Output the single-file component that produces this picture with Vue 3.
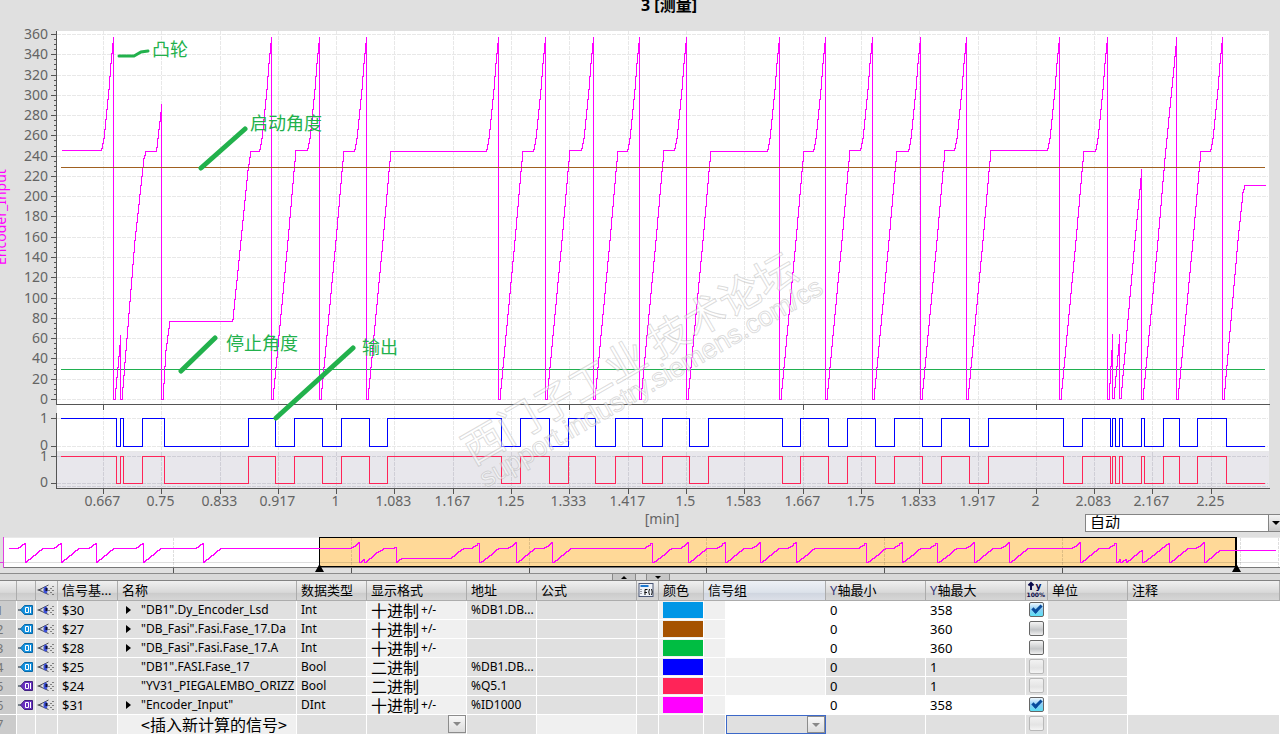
<script setup>
import { ref } from 'vue'

const bottom = 399
const yOf = (v) => Math.round(bottom - v * 1.0139) + 0.5

const yTicks = Array.from({ length: 19 }, (_, i) => ({ value: i * 20, y: yOf(i * 20) }))
const yMinor = Array.from({ length: 73 }, (_, i) => i * 5).filter((v) => v % 20).map(yOf)

const xPositions = [103, 161, 220, 278, 336, 394, 453, 511, 569, 628, 686, 744, 803, 861, 919, 978, 1036, 1094, 1152, 1211]
const xLabels = ['0.667', '0.75', '0.833', '0.917', '1', '1.083', '1.167', '1.25', '1.333', '1.417', '1.5', '1.583', '1.667', '1.75', '1.833', '1.917', '2', '2.083', '2.167', '2.25']
const xTicks = xPositions.map((x, i) => ({ x: x + 0.5, label: xLabels[i], major: i % 4 === 0 }))

// Encoder curve: climb to the dwell angle, wait, then finish the turn and wrap to zero.
const finish = (x, dwell) => [
  [x - 13, dwell], [x - 12, dwell - 2], [x - 10, 138], [x - 8, 119], [x - 5, 89],
  [x - 3, 63], [x - 1, 43], [x, 36], [x, bottom], [x + 1, bottom],
]
const climb = (x, dwell) => [[x + 16, 240], [x + 22, 171], [x + 24, dwell]]

const turns = [[271, 150], [319, 151], [366, 151], [498, 151], [545, 150], [593, 151], [639, 150], [686, 151], [779, 151], [825, 150], [872, 151], [920, 150], [966, 150], [1059, 151]]
const resets = [319, 366, 498, 545, 593, 639, 686, 779, 825, 872, 920, 966, 1059, 1107]

const encoder = [
  [61, 150], ...finish(113, 150),
  [120, 334], [120, bottom], [121, bottom],
  [134, 240], [143, 158], [145, 151], [155, 151], [156, 147], [161, 103], [161, bottom], [162, bottom],
  [165, 350], [168, 328], [169, 321], [231, 321], [232, 319], [240, 240], [247, 170], [250, 151],
  ...finish(271, 151),
  ...turns.flatMap(([x, dwell], i) => [...climb(x, dwell), ...finish(resets[i], dwell)]),
  [1112, 333], [1112, 398], [1113, 398], [1119, 333], [1119, 398], [1120, 398],
  [1134, 240], [1141, 168], [1141, bottom], [1142, bottom],
  [1157, 240], [1164, 158], [1176, 36], [1176, bottom], [1177, bottom],
  ...climb(1176, 151), ...finish(1222, 151),
  [1237, 240], [1242, 192], [1244, 185], [1265, 185],
]

function stepPath(points) {
  let d = `M${points[0][0] + 0.5} ${points[0][1] + 0.5}`
  for (let i = 1; i < points.length; i++) {
    const [x0, y0] = points[i - 1]
    const [x1, y1] = points[i]
    if (x0 === x1 || y0 === y1) {
      d += `L${x1 + 0.5} ${y1 + 0.5}`
      continue
    }
    for (let x = x0 + 1; x <= x1; x++) {
      const y = Math.round(y0 + ((y1 - y0) * (x - x0)) / (x1 - x0))
      d += `H${x + 0.5}V${y + 0.5}`
    }
  }
  return d
}
const encoderPath = stepPath(encoder)

// The overview strip shows the whole recording at a smaller scale.
const miniX = (x) => Math.round(359 + (x - 113) * 0.762)
const miniY = (y) => Math.round(562 - (bottom - y) * 0.0556)
const earlier = [25, 61, 96, 143, 203].flatMap((x) => [
  [x - 8, 548], [x, 542], [x, 562], [x + 1, 561], [x + 17, 548],
])
const overviewPath = stepPath([
  [8, 548], ...earlier,
  ...encoder.map(([x, y]) => [miniX(x), miniY(y)]),
  [1275, 550],
])
const overviewTicks = [173, 351, 529, 706, 884, 1062]

const edges = [116, 120, 123, 142, 164, 248, 275, 294, 322, 341, 369, 387, 501, 520, 549, 568, 595, 615, 642, 662, 689, 708, 782, 800, 828, 847, 875, 894, 922, 941, 969, 988, 1063, 1082, 1110, 1112, 1115, 1119, 1122, 1141, 1144, 1163, 1179, 1197, 1226]
function digitalPath(high, low) {
  let d = `M61 ${high}`
  edges.forEach((x, i) => { d += `H${x + 0.5}V${i % 2 ? high : low}` })
  return d + 'H1265'
}
const bluePath = digitalPath(418.5, 446.5)
const redPath = digitalPath(456.5, 483.5)

const columns = [17, 19, 22, 60, 179, 70, 100, 70, 100, 22, 45, 22, 100, 100, 100, 22, 80]

const rows = ref([
  { n: 1, id: '$30', tag: 'blue', name: '"DB1".Dy_Encoder_Lsd', open: true, type: 'Int', fmt: '十进制', sign: '+/-', addr: '%DB1.DB...', color: '#0096e6', max: '358', on: true, analog: true },
  { n: 2, id: '$27', tag: 'blue', name: '"DB_Fasi".Fasi.Fase_17.Da', open: true, type: 'Int', fmt: '十进制', sign: '+/-', addr: '', color: '#a55200', max: '360', on: false, analog: true },
  { n: 3, id: '$28', tag: 'blue', name: '"DB_Fasi".Fasi.Fase_17.A', open: true, type: 'Int', fmt: '十进制', sign: '+/-', addr: '', color: '#00bd42', max: '360', on: false, analog: true },
  { n: 4, id: '$25', tag: 'blue', name: '"DB1".FASI.Fase_17', open: false, type: 'Bool', fmt: '二进制', sign: '', addr: '%DB1.DB...', color: '#0000ff', max: '1', on: false, analog: false },
  { n: 5, id: '$24', tag: 'purple', name: '"YV31_PIEGALEMBO_ORIZZ', open: false, type: 'Bool', fmt: '二进制', sign: '', addr: '%Q5.1', color: '#ff2458', max: '1', on: false, analog: false },
  { n: 6, id: '$31', tag: 'purple', name: '"Encoder_Input"', open: true, type: 'DInt', fmt: '十进制', sign: '+/-', addr: '%ID1000', color: '#ff00ff', max: '358', on: true, analog: true },
])
</script>

<template>
  <main class="trace">
    <header class="title"><h1>3 [测量]</h1></header>

    <svg class="chart" viewBox="0 31 1280 482" role="img" aria-label="Encoder_Input">
      <g shape-rendering="crispEdges">
        <rect x="57" y="31" width="1212" height="373" fill="#fff" />
        <rect x="57" y="405" width="1212" height="46" fill="#fff" />
        <rect x="57" y="451" width="1212" height="37" fill="#e8e7ec" />

        <g class="grid">
          <line v-for="t in yTicks" :key="t.value" x1="57" x2="1268" :y1="t.y" :y2="t.y" />
          <line v-for="t in xTicks" :key="t.x" y1="31" y2="451" :x1="t.x" :x2="t.x" />
          <path d="M57 418.5H1268M57 446.5H1268M57 451.5H1268" />
        </g>
        <g class="grid lower">
          <line v-for="t in xTicks" :key="t.x" y1="452" y2="488" :x1="t.x" :x2="t.x" />
          <path d="M57 456.5H1268M57 483.5H1268M57 486.5H1268" />
        </g>

        <g class="axis">
          <path d="M56.5 31V404.5H1270M56.5 413V488.5H1270M51 418.5H56M51 446.5H56M51 456.5H56M51 483.5H56" />
          <line v-for="t in yTicks" :key="t.value" x1="51" x2="56" :y1="t.y" :y2="t.y" />
          <line v-for="y in yMinor" :key="y" x1="54" x2="56" :y1="y" :y2="y" />
          <line v-for="t in xTicks" :key="t.x" y1="489" y2="494" :x1="t.x" :x2="t.x" />
          <template v-for="t in xTicks" :key="t.x">
            <line v-if="t.major" y1="405" y2="410" :x1="t.x" :x2="t.x" />
          </template>
        </g>

        <g fill="none">
          <path d="M61 369.5H1265" stroke="#20b050" />
          <path :d="encoderPath" stroke="#f0f" />
          <path d="M61 167.5H1265" stroke="#a06020" />
          <path :d="bluePath" stroke="#00f" />
          <path :d="redPath" stroke="#ff2458" />
        </g>
      </g>

      <g class="labels" text-anchor="end">
        <text v-for="t in yTicks" :key="t.value" x="48" :y="t.y + 4">{{ t.value }}</text>
        <text x="48" y="423">1</text>
        <text x="48" y="450">0</text>
        <text x="48" y="461">1</text>
        <text x="48" y="487">0</text>
      </g>
      <g class="labels" text-anchor="middle">
        <text v-for="t in xTicks" :key="t.x" :x="t.x - 1" y="506">{{ t.label }}</text>
      </g>
      <text class="series" transform="translate(6 265) rotate(-90)">Encoder_Input</text>

      <g class="watermark">
        <text class="wm-name" transform="translate(473 466) rotate(-30)">西门子工业 技术论坛</text>
        <text class="wm-url" transform="translate(486 488) rotate(-30)">support.industry.siemens.com/cs</text>
      </g>

      <g class="pen">
        <path d="M119 56H134L141 52L148 51" stroke-width="3" />
        <path d="M201 168L245 129M181 371L215 338M276 418L353 348" stroke-width="5" />
      </g>
      <g class="notes">
        <text x="152" y="56">凸轮</text>
        <text x="250" y="130">启动角度</text>
        <text x="226" y="350">停止角度</text>
        <text x="362" y="354">输出</text>
      </g>
    </svg>

    <div class="unit-row">
      <span class="unit">[min]</span>
      <label class="combo">
        <select aria-label="自动"><option>自动</option></select>
        <span class="combo-arrow"><i></i></span>
      </label>
    </div>

    <svg class="overview" viewBox="0 537 1280 37" role="img" aria-label="Overview">
      <g shape-rendering="crispEdges" fill="none">
        <rect x="4" y="538" width="1276" height="29" fill="#fff" />
        <path d="M3 537.5H1280" stroke="#e9e9e9" />
        <rect x="320" y="538" width="916" height="29" fill="#ffd998" />
        <path d="M3 567.5H1280" stroke="#777" />
        <g stroke="#000" stroke-opacity="0.13">
          <path d="M4 562.5H1278" />
          <path v-for="x in overviewTicks" :key="x" :d="`M${x + 0.5} 538V567`" stroke-dasharray="3 1" />
          <path d="M1240.5 538V567M1278.5 538V567" stroke-dasharray="3 1" />
        </g>
        <path d="M319.5 567V537.5H1236M319.5 566.5H1236" stroke="#000" />
        <path d="M1236 537V567" stroke="#000" stroke-width="2" />
        <path d="M3.5 537V568M0 562.5H3" stroke="#e040e0" />
        <path :d="overviewPath" stroke="#f0f" />
        <path v-for="x in overviewTicks" :key="x" :d="`M${x + 0.5} 568V573`" stroke="#555" />
        <path d="M0 573.5H1280" stroke="#8c8c8c" />
      </g>
      <path d="M319.5 564L324 572H315ZM1236.500 564L1241 572H1232Z" fill="#000" />
    </svg>

    <div class="splitter">
      <button type="button" aria-label="Collapse up"><i class="up"></i></button>
      <button type="button" aria-label="Collapse down"><i class="down"></i></button>
    </div>

    <table class="signals">
      <colgroup>
        <col v-for="(w, i) in columns" :key="i" :style="{ width: w + 'px' }" />
        <col />
      </colgroup>
      <thead>
        <tr>
          <th></th>
          <th></th>
          <th>
            <svg class="icon" viewBox="0 0 20 18"><use href="#eye" /></svg>
          </th>
          <th><div>信号基...</div></th>
          <th><div>名称</div></th>
          <th><div>数据类型</div></th>
          <th><div>显示格式</div></th>
          <th><div>地址</div></th>
          <th><div>公式</div></th>
          <th>
            <svg class="icon" viewBox="0 0 20 18">
              <rect x="1.500" y="2.500" width="14" height="13" fill="#eef2f8" stroke="#4c5878" />
              <path d="M3 5H11" stroke="#1c78d0" stroke-width="2" />
              <path d="M3.500 8V14" stroke="#445" stroke-dasharray="1 1" />
              <path d="M7.500 14V8.500H10M7 11.500H9.500M12 8Q10.500 11 12 14M14 8Q15.500 11 14 14" fill="none" stroke="#111" />
            </svg>
          </th>
          <th><div>颜色</div></th>
          <th colspan="2" class="picked"><div>信号组</div></th>
          <th><div><span class="y">Y</span>轴最小</div></th>
          <th><div><span class="y">Y</span>轴最大</div></th>
          <th>
            <svg class="icon" viewBox="0 0 20 18">
              <path d="M4.500 9V3M2 4.500L4.500 2L7 4.500" fill="none" stroke="#0a0a4a" stroke-width="2" />
              <text x="9" y="8" class="scale-y">y</text>
              <text x="0" y="16" class="scale-p">100%</text>
            </svg>
          </th>
          <th><div>单位</div></th>
          <th><div>注释</div></th>
        </tr>
      </thead>
      <tbody>
        <tr v-for="r in rows" :key="r.n">
          <td class="num"><div>{{ r.n }}</div></td>
          <td>
            <svg class="icon" viewBox="0 0 18 18">
              <path d="M1 9H4" stroke="#123" />
              <path d="M3.500 9L7.500 4.500H15.500V13.500H7.500Z" :fill="r.tag === 'blue' ? '#1492e0' : '#6a30c0'" :stroke="r.tag === 'blue' ? '#0868a8' : '#402080'" />
              <path d="M8.500 6.500H11.500V11.500H8.500ZM13.500 6V12" fill="none" stroke="#fff" />
            </svg>
          </td>
          <td><svg class="icon" viewBox="0 0 20 18"><use href="#eye" /></svg></td>
          <td><div>{{ r.id }}</div></td>
          <td class="small">
            <div>
              <button v-if="r.open" type="button" class="expander" :aria-label="'Expand ' + r.id"><i></i></button>
              <span v-else class="expander"></span>{{ r.name }}
            </div>
          </td>
          <td class="small"><div>{{ r.type }}</div></td>
          <td class="edit"><div class="mixed"><span class="cjk">{{ r.fmt }}</span><span v-if="r.sign" class="sign">{{ r.sign }}</span></div></td>
          <td class="small"><div>{{ r.addr }}</div></td>
          <td></td>
          <td></td>
          <td class="edit"><div><span class="swatch" :style="{ background: r.color }"></span></div></td>
          <td class="edit"></td>
          <td :class="r.analog ? 'open' : 'edit'"></td>
          <td :class="{ open: r.analog }"><div>0</div></td>
          <td :class="{ open: r.analog }"><div>{{ r.max }}</div></td>
          <td :class="{ open: r.analog }" class="check">
            <input v-model="r.on" type="checkbox" :disabled="!r.analog" :aria-label="'Auto scale ' + r.id" />
          </td>
          <td></td>
          <td class="open"></td>
        </tr>
        <tr>
          <td class="num"><div>7</div></td>
          <td></td>
          <td></td>
          <td></td>
          <td class="edit"><div class="mixed"><span class="expander"></span><span class="cjk">&lt;插入新计算的信号&gt;</span></div></td>
          <td></td>
          <td>
            <button type="button" class="drop" aria-label="显示格式"><i></i></button>
          </td>
          <td></td>
          <td class="edit"></td>
          <td></td>
          <td></td>
          <td></td>
          <td class="focused">
            <label class="group">
              <select aria-label="信号组"><option></option></select>
              <span class="drop"><i></i></span>
            </label>
          </td>
          <td></td>
          <td></td>
          <td class="check"><input type="checkbox" disabled aria-label="Auto scale" /></td>
          <td></td>
          <td></td>
        </tr>
      </tbody>
    </table>

    <svg class="defs" aria-hidden="true">
      <symbol id="eye" viewBox="0 0 20 18">
        <path d="M12 4L2 9L12 13.500M1 9H5" fill="none" stroke="#505058" />
        <ellipse cx="9" cy="9" rx="2" ry="3.500" fill="#3c50d8" />
        <rect x="9" y="7" width="2" height="3" fill="#101030" />
        <path d="M12 9.500H13M14 7.500H15M14 11.500H15M16 5.500H17M16 9.500H17M16 13.500H17" stroke="#222" />
      </symbol>
    </svg>
  </main>
</template>

<style>
body {
  margin: 0;
  background: #e0e0e0;
}
</style>

<style scoped>
.trace {
  overflow: hidden;
  background: #e0e0e0;
  color: #000;
  font-family: "Noto Sans", "Noto Sans CJK SC", sans-serif;
  font-size: 13px;
}
.title {
  display: flex;
  justify-content: center;
  align-items: flex-start;
  height: 31px;
  padding-left: 58px;
}
.title h1 {
  margin: 0;
  font-size: 16px;
  font-weight: 700;
  line-height: 10px;
}
.chart,
.overview {
  display: block;
  width: 100%;
}
.chart {
  overflow: visible;
}
.grid {
  stroke: #e8e8e8;
  stroke-dasharray: 4 1;
}
.lower {
  stroke: #cfced6;
}
.axis {
  fill: none;
  stroke: #555;
}
.labels {
  fill: #646464;
  font-size: 14px;
}
.series {
  fill: #f0f;
  font-size: 14px;
}
.pen {
  fill: none;
  stroke: #22b14c;
  stroke-linecap: round;
}
.notes {
  fill: #22b14c;
  font-family: "Noto Sans CJK SC", sans-serif;
  font-size: 18px;
}
.watermark {
  fill: #fff;
  fill-opacity: 0.5;
  stroke: #999;
  stroke-opacity: 0.35;
}
.wm-name {
  font-family: "Noto Sans CJK SC", sans-serif;
  font-size: 41px;
}
.wm-url {
  font-family: "Liberation Sans", Arial, sans-serif;
  font-size: 27px;
}
.unit-row {
  display: grid;
  height: 24px;
}
.unit {
  grid-area: 1 / 1;
  justify-self: center;
  padding-left: 44px;
  color: #646464;
  font-size: 14px;
  line-height: 11px;
}
.combo {
  grid-area: 1 / 1;
  justify-self: end;
  display: flex;
  box-sizing: border-box;
  width: 195px;
  height: 18px;
  margin-top: 1px;
  border: 1px solid #848484;
  border-right: 0;
  background: #fff;
}
.combo select {
  flex: 1;
  appearance: none;
  border: 0;
  padding: 0 4px 2px;
  background: transparent;
  color: #000;
  font-family: "Noto Sans CJK SC", sans-serif;
  font-size: 15px;
  line-height: 14px;
}
.combo-arrow {
  display: flex;
  align-items: center;
  justify-content: flex-end;
  width: 11px;
  border-left: 1px solid #848484;
  background: linear-gradient(#f4f4f4, #c8c8c8);
}
.combo-arrow i,
.up,
.down,
.drop i {
  border: 4px solid transparent;
  border-bottom: 0;
  border-top-color: #000;
}
.splitter {
  display: flex;
  justify-content: center;
  gap: 10px;
  height: 7px;
  box-sizing: border-box;
  padding-left: 2px;
  border-bottom: 1px solid #828282;
  background: #d9d9d9;
}
.splitter button {
  display: flex;
  align-items: center;
  justify-content: center;
  width: 24px;
  height: 6px;
  padding: 0;
  border: 1px solid #888;
  border-width: 0 1px;
  background: #c6c6c6;
}
.up {
  border: 3px solid transparent;
  border-top: 0;
  border-bottom-color: #000;
}
.down {
  border-width: 3px 3px 0;
}
.signals {
  width: 100%;
  table-layout: fixed;
  border-collapse: separate;
  border-spacing: 0;
  background: #fff;
}
.signals th,
.signals td {
  box-sizing: border-box;
  height: 19px;
  padding: 0;
  border-right: 1px solid #fff;
  border-bottom: 1px solid #fff;
  background: #e0e0e0;
  text-align: left;
  vertical-align: top;
  overflow: hidden;
}
.signals th {
  height: 20px;
  border-right-color: #acacac;
  border-bottom-color: #acacac;
  background: linear-gradient(#f0f0f0, #d8d8d8 60%, #cccccc 65%, #d6d6d6);
  font-weight: 400;
}
.signals th.picked {
  background: linear-gradient(#eef1f6, #dce2ea 60%, #d0d6e0 65%, #dce0e8);
}
.signals th div,
.signals td div {
  height: 18px;
  padding-left: 4px;
  line-height: 18px;
  white-space: nowrap;
  overflow: hidden;
}
.signals td.small {
  font-size: 12px;
}
.signals td .mixed {
  display: flex;
  align-items: center;
}
.signals td.edit {
  background: #f0f0f0;
}
.signals td.open {
  background: #fff;
}
.signals td.num {
  background: #cbcbcb;
  color: #777;
}
.signals td.num div {
  padding-left: 0;
  text-indent: -4px;
}
.icon {
  display: block;
  width: 100%;
  height: 18px;
}
.y {
  color: #3a3a78;
}
.scale-y,
.scale-p {
  fill: #0a0a4a;
  font-family: "DejaVu Sans", sans-serif;
  font-weight: 700;
}
.scale-y {
  font-size: 9px;
}
.scale-p {
  font-size: 6px;
}
.expander {
  display: inline-block;
  width: 19px;
  height: 8px;
  padding: 0 4px;
  box-sizing: border-box;
  border: 0;
  background: transparent;
  line-height: 0;
}
.expander i {
  display: block;
  width: 0;
  border: 4px solid transparent;
  border-left: 5px solid #000;
  border-right: 0;
}
.cjk {
  font-family: "Noto Sans CJK SC", sans-serif;
  font-size: 16px;
  line-height: 16px;
}
.sign {
  padding-left: 2px;
  font-size: 12px;
}
.swatch {
  display: block;
  width: 40px;
  height: 16px;
  margin-top: 1px;
}
.check input {
  display: block;
  appearance: none;
  box-sizing: border-box;
  width: 15px;
  height: 15px;
  margin: 1px 0 0 3px;
  border: 1px solid #666;
  border-radius: 2px;
  background: linear-gradient(#f4f4f4, #c4c6c8 60%, #efefef);
}
.check input:disabled {
  border-color: #b8b8b8;
  background: linear-gradient(#f2f2f2, #e4e4e4 60%, #f4f4f4);
}
.check input:checked {
  background: linear-gradient(#eef8ff, #8ccdf4 50%, #5ce0f4);
}
.check input:checked::after {
  content: "";
  display: block;
  box-sizing: border-box;
  width: 10px;
  height: 6px;
  margin: 2px 0 0 2px;
  border: solid #084c9c;
  border-width: 0 0 3px 3px;
  transform: rotate(-45deg);
}
.drop {
  display: flex;
  flex: none;
  align-items: center;
  justify-content: center;
  box-sizing: border-box;
  width: 18px;
  height: 18px;
  padding: 0;
  border: 1px solid #8c8c8c;
  background: linear-gradient(#f8f8f8, #dcdcdc);
}
button.drop {
  margin-left: auto;
}
.drop i {
  border-top-color: #888;
}
.signals td.focused {
  border-right: 0;
}
.group {
  display: flex;
  box-sizing: border-box;
  height: 19px;
  border: 1px solid #3c68c8;
}
.group select {
  flex: 1;
  min-width: 0;
  appearance: none;
  border: 0;
  background: transparent;
}
.group .drop {
  height: 17px;
}
.defs {
  position: absolute;
  width: 0;
  height: 0;
}
</style>
